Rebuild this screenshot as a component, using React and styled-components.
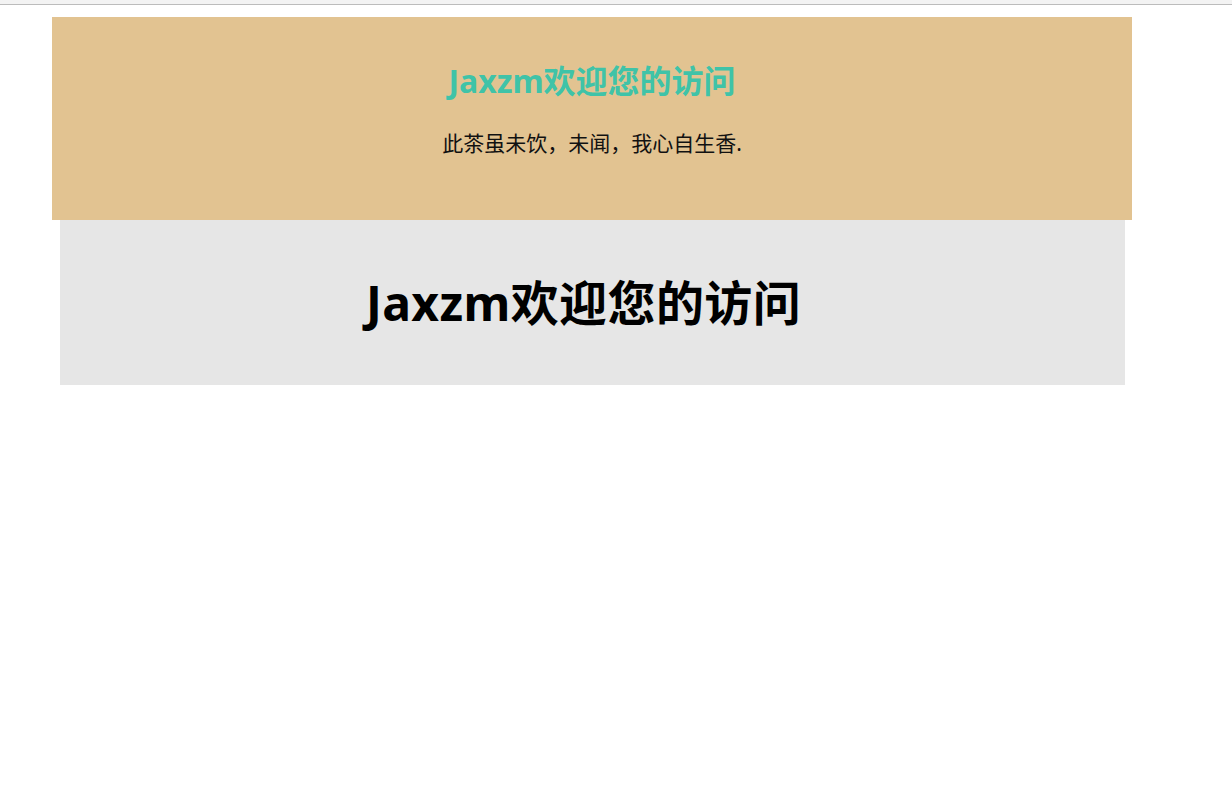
import React from 'react'
import styled, { createGlobalStyle } from 'styled-components'

const GlobalStyle = createGlobalStyle`
  html, body {
    margin: 0;
    padding: 0;
    background: #ffffff;
  }
  body {
    font-family: "Microsoft YaHei", "Noto Sans", "Noto Sans CJK SC", sans-serif;
  }
`

const TopStrip = styled.div`
  height: 4px;
  background: #f3f3f3;
  border-bottom: 1px solid #bcbcbc;
`

const Page = styled.div`
  padding-top: 12px;
  display: flex;
  flex-direction: column;
`

const Banner = styled.header`
  width: 1080px;
  height: 203px;
  margin-left: 52px;
  box-sizing: border-box;
  padding-top: 44px;
  background: #e2c391;
  display: flex;
  flex-direction: column;
  align-items: center;
`

const BannerTitle = styled.h1`
  margin: 0;
  font-size: 32px;
  line-height: 40px;
  font-weight: 700;
  color: #3fc3a8;
`

const Motto = styled.p`
  margin: 27px 0 0;
  font-size: 21px;
  line-height: 30px;
  color: #111;
`

const Hero = styled.section`
  width: 1065px;
  height: 165px;
  margin-left: 60px;
  box-sizing: border-box;
  padding-right: 18px;
  background: #e6e6e6;
  display: flex;
  align-items: center;
  justify-content: center;
`

const HeroTitle = styled.h2`
  margin: 0;
  font-size: 48px;
  line-height: 60px;
  font-weight: 700;
  letter-spacing: 0.4px;
  color: #000;
`

export default function App() {
  return (
    <>
      <GlobalStyle />
      <TopStrip />
      <Page>
        <Banner>
          <BannerTitle>Jaxzm欢迎您的访问</BannerTitle>
          <Motto>此茶虽未饮，未闻，我心自生香.</Motto>
        </Banner>
        <Hero>
          <HeroTitle>Jaxzm欢迎您的访问</HeroTitle>
        </Hero>
      </Page>
    </>
  )
}
